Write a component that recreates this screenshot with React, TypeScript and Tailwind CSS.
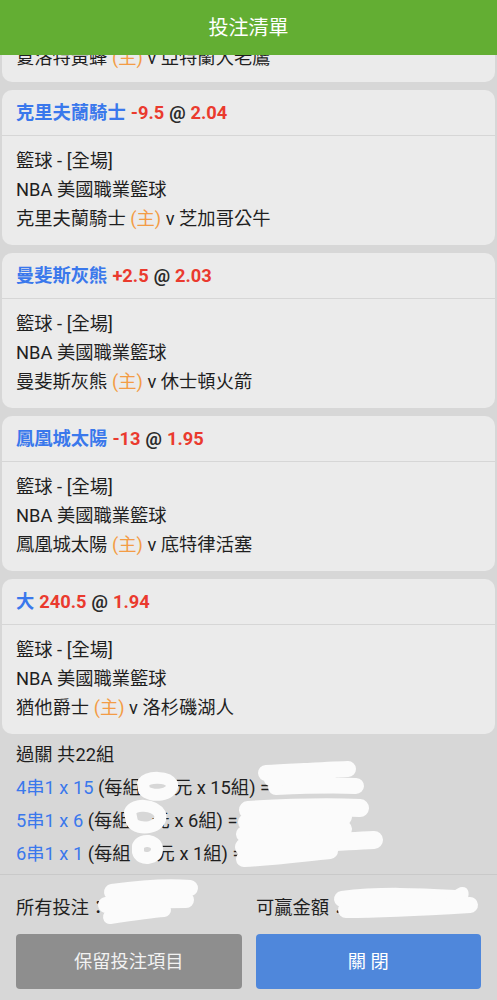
import React from "react";

type Bet = {
  pick: string;
  line: string;
  odds: string;
  home: string;
  away: string;
};

const bets: Bet[] = [
  { pick: "克里夫蘭騎士", line: "-9.5", odds: "2.04", home: "克里夫蘭騎士", away: "芝加哥公牛" },
  { pick: "曼斐斯灰熊", line: "+2.5", odds: "2.03", home: "曼斐斯灰熊", away: "休士頓火箭" },
  { pick: "鳳凰城太陽", line: "-13", odds: "1.95", home: "鳳凰城太陽", away: "底特律活塞" },
  { pick: "大", line: "240.5", odds: "1.94", home: "猶他爵士", away: "洛杉磯湖人" },
];

function Card({ bet }: { bet: Bet }) {
  return (
    <div className="mx-[2px] h-[155px] shrink-0 overflow-hidden rounded-[10px] bg-[#ebebeb]">
      <div className="flex h-[46px] items-center border-b border-[#d6d6d6] px-[14px] text-[18.3px] font-bold">
        <span className="text-[#3a78ec]">{bet.pick}</span>
        <span className="ml-[5px] text-[#ea3a2e]">{bet.line}</span>
        <span className="ml-[5px] text-[#2a2a2a]">@</span>
        <span className="ml-[5px] text-[#ea3a2e]">{bet.odds}</span>
      </div>
      <div className="px-[14px] pt-[10px] text-[18.3px] leading-[29px] text-[#1f1f1f]">
        <div>籃球 - [全場]</div>
        <div>NBA 美國職業籃球</div>
        <div>
          {bet.home} <span className="text-[#f39c45]">(主)</span> v {bet.away}
        </div>
      </div>
    </div>
  );
}

function Scribbles() {
  const s = {
    fill: "none",
    stroke: "#fbfbfb",
    strokeLinecap: "round" as const,
    strokeLinejoin: "round" as const,
  };
  return (
    <svg
      className="pointer-events-none absolute left-0 top-0"
      width="497"
      height="1000"
      viewBox="0 0 497 1000"
    >
      {/* blobs in 每組 amounts */}
      <path d="M143 783 C148 776 168 776 172 784 C174 796 150 798 144 790 Z" fill="#fbfbfb" {...s} strokeWidth={12} />
      <path d="M130 812 C134 803 154 804 160 814 C164 828 138 832 132 822 Z" fill="#fbfbfb" {...s} strokeWidth={12} />
      <path d="M138 846 C142 838 156 840 157 848 C158 860 140 861 138 852 Z" fill="#fbfbfb" {...s} strokeWidth={12} />
      {/* after = line 1 */}
      <path d="M266 773 C290 772 320 770 348 769" {...s} strokeWidth={16} />
      <path d="M276 787 C300 786 330 785 356 786" {...s} strokeWidth={16} />
      <path d="M270 780 L330 779" {...s} strokeWidth={12} />
      {/* after = line 2 & 3 */}
      <path d="M248 810 C280 808 320 806 360 808" {...s} strokeWidth={18} />
      <path d="M246 822 C280 820 320 816 344 817" {...s} strokeWidth={16} />
      <path d="M244 834 C280 832 320 830 344 829" {...s} strokeWidth={16} />
      <path d="M244 847 C290 845 330 842 374 840" {...s} strokeWidth={18} />
      <path d="M244 859 C280 857 300 854 330 851" {...s} strokeWidth={16} />
      {/* 所有投注 */}
      <path d="M112 892 C140 888 170 886 190 888" {...s} strokeWidth={16} />
      <path d="M106 905 C130 902 160 900 186 900" {...s} strokeWidth={16} />
      <path d="M110 917 C130 914 150 911 164 910" {...s} strokeWidth={14} />
      {/* 可贏金額 */}
      <path d="M342 899 C380 894 420 896 455 898" {...s} strokeWidth={16} />
      <path d="M346 910 C380 910 420 908 470 905" {...s} strokeWidth={16} />
      <path d="M456 896 C462 890 466 890 462 900" {...s} strokeWidth={10} />
    </svg>
  );
}

export default function App() {
  return (
    <div
      className="relative flex h-[1000px] w-[497px] flex-col overflow-hidden bg-[#d7d7d7]"
      style={{ fontFamily: "Roboto, 'Noto Sans CJK TC', sans-serif" }}
    >
      <div className="relative z-10 flex h-[55px] shrink-0 items-center justify-center bg-[#63ae33] text-[20px] text-white">
        投注清單
      </div>
      <div className="flex flex-col gap-[8px]">
        <div className="mx-[2px] h-[27px] shrink-0 overflow-hidden rounded-b-[10px] bg-[#ebebeb]">
          <div className="mt-[-12px] px-[14px] text-[18.3px] leading-[29px] text-[#1f1f1f]">
            夏洛特黃蜂 <span className="text-[#f39c45]">(主)</span> v 亞特蘭大老鷹
          </div>
        </div>
        {bets.map((b, i) => (
          <Card key={i} bet={b} />
        ))}
      </div>
      <div className="px-4 pt-[4px] pb-[4px] text-[18.3px] leading-[33px] text-[#1f1f1f]">
        <div>過關 共22組</div>
        <div>
          <span className="text-[#3a78ec]">4串1 x 15</span> (每組
          <span className="inline-block w-[33px]" />元 x 15組) =
        </div>
        <div>
          <span className="text-[#3a78ec]">5串1 x 6</span> (每組
          <span className="inline-block w-[21px]" />元 x 6組) =
        </div>
        <div>
          <span className="text-[#3a78ec]">6串1 x 1</span> (每組
          <span className="inline-block w-[26px]" />元 x 1組) =
        </div>
      </div>
      <div className="border-t border-[#c9c9c9] px-4 pt-[20px]">
        <div className="flex h-[26px] items-center text-[18.3px] text-[#1f1f1f]">
          <div className="w-[240px]">所有投注：</div>
          <div>可贏金額：</div>
        </div>
        <div className="mt-[13px] flex gap-[14px]">
          <button className="flex h-[55px] flex-1 items-center justify-center rounded-[4px] bg-[#8e8e8e] text-[18.3px] text-[#f2f2f2]">
            保留投注項目
          </button>
          <button className="flex h-[55px] flex-1 items-center justify-center rounded-[4px] bg-[#4f87db] text-[18.3px] text-white">
            關 閉
          </button>
        </div>
      </div>
      <Scribbles />
    </div>
  );
}
